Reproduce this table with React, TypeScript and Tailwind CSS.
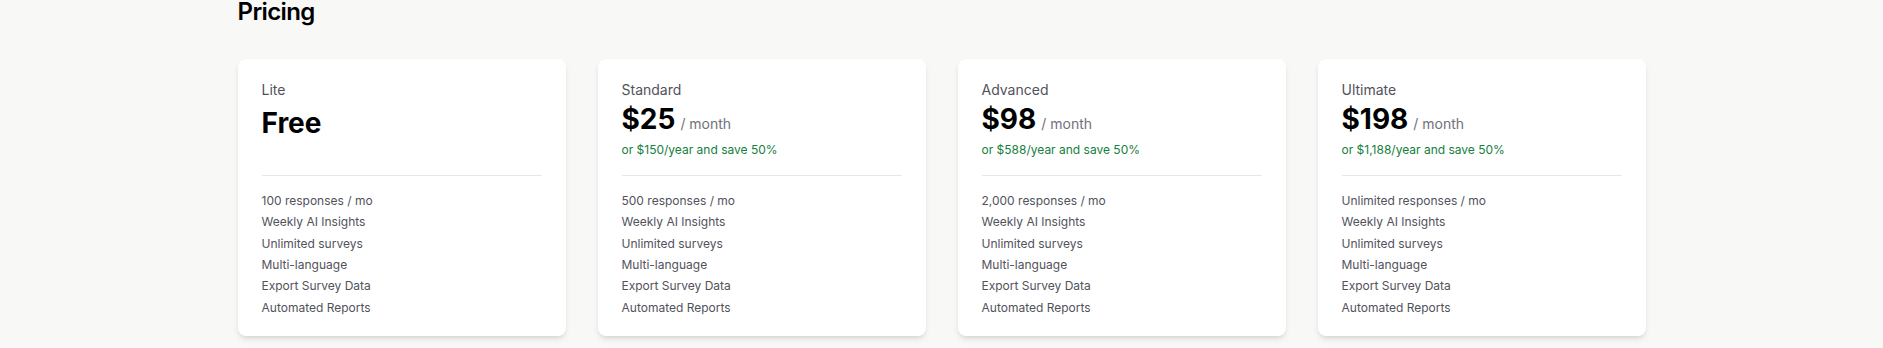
const plans = [
  {
    name: "Lite",
    price: "Free",
    period: null,
    yearly: null,
    responses: "100 responses / mo",
  },
  {
    name: "Standard",
    price: "$25",
    period: "/ month",
    yearly: "or $150/year and save 50%",
    responses: "500 responses / mo",
  },
  {
    name: "Advanced",
    price: "$98",
    period: "/ month",
    yearly: "or $588/year and save 50%",
    responses: "2,000 responses / mo",
  },
  {
    name: "Ultimate",
    price: "$198",
    period: "/ month",
    yearly: "or $1,188/year and save 50%",
    responses: "Unlimited responses / mo",
  },
];

const features = [
  "Weekly AI Insights",
  "Unlimited surveys",
  "Multi-language",
  "Export Survey Data",
  "Automated Reports",
];

const App = () => {
  return (
    <div className="min-h-[348px] w-full bg-[#f8f8f7] font-['Inter',sans-serif]">
      <div className="mx-auto w-[1408px]">
        <h2 className="text-2xl leading-none font-semibold tracking-tight text-black">Pricing</h2>

        <div className="mt-[35px] grid grid-cols-4 gap-8">
          {plans.map((plan) => (
            <div
              key={plan.name}
              className="rounded-lg bg-white px-6 pt-5 pb-[18px] shadow-md"
            >
              <div className="h-[96px]">
                <div className="text-[14px] leading-[22px] text-[#52525b]">{plan.name}</div>
                {plan.period ? (
                  <div className="flex items-baseline gap-[5px]">
                    <span className="text-[28px] leading-9 font-bold text-black">{plan.price}</span>
                    <span className="text-[14px] text-[#71717a]">{plan.period}</span>
                  </div>
                ) : (
                  <div className="mt-[4px] text-[28px] leading-9 font-bold text-black">
                    {plan.price}
                  </div>
                )}
                {plan.yearly && (
                  <div className="mt-[3px] text-[12px] leading-5 text-[#15803d]">{plan.yearly}</div>
                )}
              </div>

              <div className="border-t border-gray-200" />

              <ul className="mt-[14px] text-[12px] leading-[21.33px] text-[#52525b]">
                <li>{plan.responses}</li>
                {features.map((f) => (
                  <li key={f}>{f}</li>
                ))}
              </ul>
            </div>
          ))}
        </div>
      </div>
    </div>
  );
};

export default App;
